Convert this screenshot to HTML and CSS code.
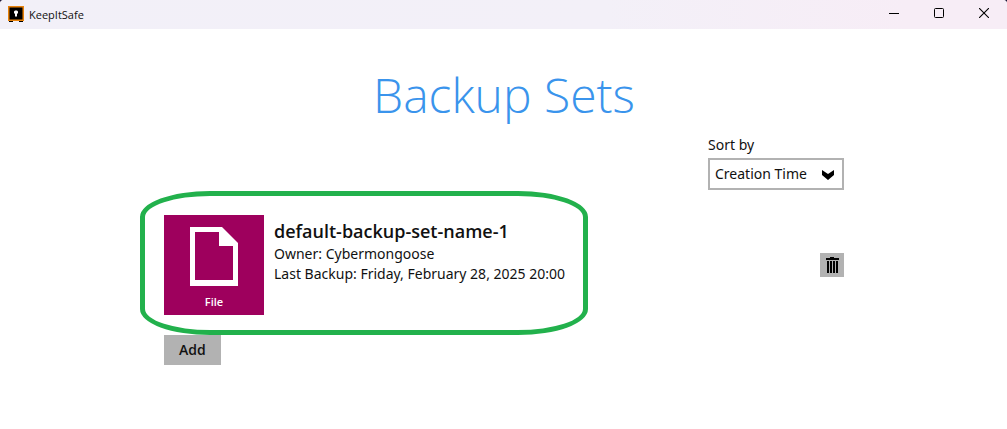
FILE: index.html
```html
<!DOCTYPE html>
<html lang="en">
<head>
    <meta charset="UTF-8">
    <meta name="viewport" content="width=device-width, initial-scale=1.0">
    <title>KeepItSafe</title>
    <link rel="stylesheet" href="styles.css">
</head>
<body>
    <header class="titlebar">
        <svg class="app-icon" width="16" height="16" viewBox="0 0 16 16" aria-hidden="true">
            <path fill="#000" d="M1 14h4v2H1zM11 14h4v2h-4z"/>
            <path fill="#e8820c" d="M0 0h16v15H0z"/>
            <path fill="#000" d="M1.5 1.5h13v12h-13z"/>
            <path fill="#fff" d="M7 4.5h2l1 1V7L9 8v2.500H7V8L6 7V5.500z"/>
        </svg>
        <span class="app-name">KeepItSafe</span>
        <div class="window-buttons">
            <button type="button" aria-label="Minimize">
                <svg width="10" height="10" viewBox="0 0 10 10"><path fill="#000" d="M0 5h10v1H0z"/></svg>
            </button>
            <button type="button" aria-label="Maximize">
                <svg width="10" height="10" viewBox="0 0 10 10"><rect x=".5" y=".5" width="9" height="9" rx="1" fill="none" stroke="#000"/></svg>
            </button>
            <button type="button" aria-label="Close">
                <svg width="10" height="10" viewBox="0 0 10 10"><path d="M0 0l10 10M10 0L0 10" stroke="#000" stroke-width="1.1"/></svg>
            </button>
        </div>
    </header>

    <main class="content">
        <h1>Backup Sets</h1>

        <div class="sort">
            <label for="sort-by">Sort by</label>
            <div class="select-box">
                <select id="sort-by">
                    <option>Creation Time</option>
                </select>
                <svg class="arrow" width="12" height="10" viewBox="0 0 12 10" aria-hidden="true"><path d="M0 0l6 4 6-4v5L6 10 0 5z"/></svg>
            </div>
        </div>

        <div class="backup-set">
            <div class="tile">
                <svg width="48" height="60" viewBox="0 0 48 60" aria-hidden="true">
                    <path fill="#fff" fill-rule="evenodd" d="M0 0h32l16 16v43H0zM5 5v48h38V19H29V5z"/>
                </svg>
                <span class="tile-label">File</span>
            </div>
            <div class="details">
                <h2>default-backup-set-name-1</h2>
                <p>Owner: Cybermongoose</p>
                <p>Last Backup: Friday, February 28, 2025 20:00</p>
            </div>
            <button class="delete-button" type="button" aria-label="Delete">
                <svg width="14" height="16" viewBox="0 0 14 16"><path d="M5 0h4v1h5v2H1V1h4zM2 4h2v12H2zM5 4h2v12H5zM8 4h2v12H8zM11 4h2v12h-2z"/></svg>
            </button>
            <div class="highlight"></div>
        </div>

        <button class="add-button" type="button">Add</button>
    </main>
</body>
</html>
```
FILE: styles.css
```css
* {
    box-sizing: border-box;
}
html {
    background-color: #1c1638;
}
body {
    margin: 0;
    min-height: 100vh;
    border-radius: 4px 4px 0 0;
    overflow: hidden;
    font-family: "Noto Sans", "Open Sans", sans-serif;
    font-size: 14px;
    line-height: 20px;
    color: #111;
    background-color: #fff;
}
button, h1, h2, .app-name, .tile-label {
    font-family: "Open Sans", "Noto Sans", sans-serif;
}
button {
    border: none;
    padding: 0;
    cursor: pointer;
}

/* Window title bar */
.titlebar {
    display: flex;
    align-items: center;
    height: 29px;
    padding-left: 8px;
    background: linear-gradient(to right, #f2f0f8, #f3f0f8 60%, #f7edf6 90%);
}
.app-icon {
    margin-bottom: 2px;
}
.app-name {
    margin-left: 5px;
    font-size: 11px;
}
.window-buttons {
    display: flex;
    align-self: stretch;
    margin-left: auto;
}
.window-buttons button {
    display: flex;
    align-items: center;
    justify-content: center;
    width: 45px;
    padding: 0 1px 3px 0;
    background: none;
}

/* Backup sets */
.content {
    max-width: 681px;
    margin: 0 auto;
    padding: 34px 0 0 1px;
}
h1 {
    margin: 0 0 8px;
    font-size: 48px;
    line-height: 64px;
    font-weight: 300;
    text-align: center;
    color: #3a94ec;
}
.sort {
    display: flex;
    flex-direction: column;
    gap: 3px;
    width: 136px;
    margin-left: auto;
}
.select-box {
    position: relative;
}
.select-box select {
    display: block;
    appearance: none;
    width: 100%;
    height: 32px;
    padding: 0 5px 2px;
    border: 2px solid #b2b2b2;
    border-radius: 0;
    background-color: #fff;
    font-family: inherit;
    font-size: 14px;
    color: #111;
}
.arrow {
    position: absolute;
    top: 12px;
    right: 10px;
    pointer-events: none;
}
.backup-set {
    position: relative;
    display: flex;
    gap: 10px;
    margin: 25px 0 20px;
}
.tile {
    display: flex;
    flex-direction: column;
    align-items: center;
    justify-content: space-between;
    width: 100px;
    height: 100px;
    padding: 12px 0 5px;
    background-color: #9e005d;
}
.tile-label {
    font-size: 11px;
    line-height: 16px;
    font-weight: 600;
    color: #fff;
}
.details {
    padding-top: 4px;
}
.details h2 {
    margin: 0 0 1px;
    font-size: 18px;
    line-height: 24px;
    font-weight: 600;
}
.details p {
    margin: 0;
}
.delete-button {
    display: flex;
    align-items: center;
    justify-content: center;
    align-self: center;
    width: 24px;
    height: 24px;
    margin-left: auto;
    background-color: #b2b2b2;
}
.highlight {
    position: absolute;
    top: -24px;
    left: -24px;
    width: 448px;
    height: 144px;
    border: 5px solid #22b14c;
    border-radius: 70px / 26px;
    pointer-events: none;
}
.add-button {
    padding: 5px 15px;
    background-color: #b2b2b2;
    font-size: 14px;
    line-height: 20px;
    font-weight: 600;
    color: #111;
}
```
